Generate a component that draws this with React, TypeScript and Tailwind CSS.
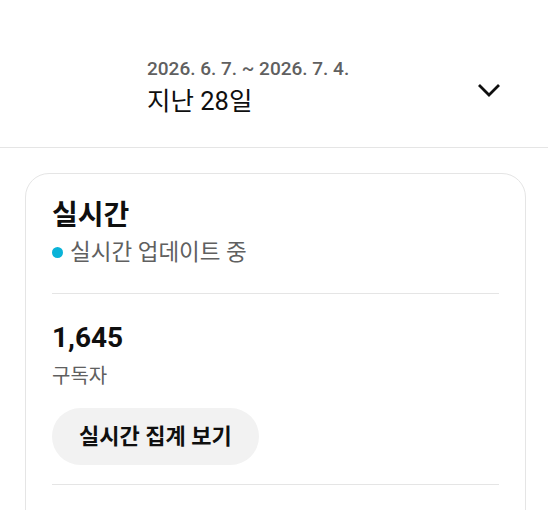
import React from "react";

const font = { fontFamily: 'Roboto, "Noto Sans CJK KR", sans-serif' };

export default function App() {
  return (
    <div className="w-[548px] h-[510px] overflow-hidden bg-white" style={font}>
      <div className="h-[148px] border-b border-[#e5e5e5] flex">
        <div className="flex-1 pl-[147px] pt-[55px]">
          <div className="text-[19px] leading-[28px] font-medium text-[#606060]">2026. 6. 7. ~ 2026. 7. 4.</div>
          <div className="mt-[2px] text-[25.5px] leading-[32px] text-[#0f0f0f]">지난 28일</div>
        </div>
        <div className="pt-[78px] pr-[47px]">
          <svg width="24" height="24" viewBox="0 0 24 24" fill="none">
            <path d="M2 7 L12 17 L22 7" stroke="#0f0f0f" strokeWidth="2.8" strokeLinejoin="miter" />
          </svg>
        </div>
      </div>
      <div className="mt-[25px] ml-[25px] mr-[22px] h-[400px] border border-[#e5e5e5] rounded-[24px] px-[26px] pt-[24px]">
        <div className="text-[28px] leading-[36px] font-bold text-[#0f0f0f]">실시간</div>
        <div className="mt-[4px] flex items-center h-[28px] text-[22.5px] leading-[28px] text-[#606060]">
          <span className="w-[11px] h-[11px] rounded-full bg-[#0ab3d8] mr-[7px] mt-[1px]" />
          <span>실시간 업데이트 중</span>
        </div>
        <div className="mt-[27px] border-t border-[#e5e5e5]" />
        <div className="pt-[26px] text-[28px] leading-[36px] font-bold text-[#0f0f0f]">1,645</div>
        <div className="mt-[6px] text-[20px] leading-[28px] text-[#606060]">구독자</div>
        <button className="mt-[18px] h-[57px] px-[27px] rounded-full bg-[#f2f2f2] text-[22px] font-bold text-[#0f0f0f] flex items-center" style={font}>
          실시간 집계 보기
        </button>
        <div className="mt-[19px] border-t border-[#e5e5e5]" />
      </div>
    </div>
  );
}
